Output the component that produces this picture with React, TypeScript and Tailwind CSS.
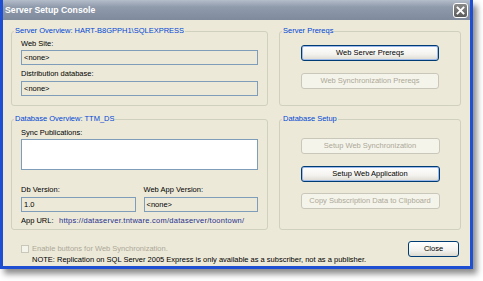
import React from "react";

const field = "h-[15px] border border-[#7F9DB9] bg-[#ECE9D8] px-[2px] flex items-center";
const btn = "h-[16px] mx-auto flex items-center justify-center rounded-[3px] border";
const btnOn = "border-[#003C74] bg-[linear-gradient(#FFFFFF,#F3F2EE_60%,#DCDAD0)] text-black";
const btnFocus = "shadow-[inset_0_0_0_1px_#9DB9EB]";
const btnOff = "border-[#C9C7BA] bg-[#F5F4EA] text-[#ACA899]";

function Group({ title, className, children }: { title: string; className?: string; children: React.ReactNode }) {
    return (
        <fieldset className={"border border-[#D0D0BF] rounded-[3px] px-[9px] " + (className ?? "")}>
            <legend className="ml-[-7px] px-[1px] leading-[10px] text-[#0046D5]">{title}</legend>
            {children}
        </fieldset>
    );
}

function App() {
    return (
        <div className="w-[483px] h-[281px] bg-white font-['Liberation_Sans',Arial,sans-serif] text-[7.5px] text-black">
            <div className="w-[473px] h-[269px] flex flex-col border-x-[3px] border-b-[3px] border-[#1E4FD3] shadow-[4px_5px_6px_rgba(0,0,0,0.45)]">

                {/* title bar */}
                <div className="h-[20px] flex items-center justify-between pl-[2px] pr-[2px] bg-[linear-gradient(#B4BDCA,#8F9AAB_35%,#7F8B9D)]">
                    <span className="text-white font-bold text-[8.7px] leading-none">Server Setup Console</span>
                    <div className="w-[15px] h-[15px] rounded-[3px] border border-white bg-[linear-gradient(#8A8A8A,#5A5A5A)] flex items-center justify-center">
                        <svg width="9" height="9" viewBox="0 0 9 9">
                            <path d="M1.5 1.5L7.5 7.5M7.5 1.5L1.5 7.5" stroke="white" strokeWidth="1.8" strokeLinecap="square" />
                        </svg>
                    </div>
                </div>

                <div className="flex-1 bg-[#ECE9D8] pl-[8px] pr-[9px] pt-[6px] flex flex-col">
                    <div className="grid grid-cols-[257px_182px] gap-x-[11px] gap-y-[8px]">

                        <Group title="Server Overview: HART-B8GPPH1\SQLEXPRESS" className="h-[80px]">
                            <div className="mt-[3px] leading-[10px]">Web Site:</div>
                            <div className={field + " mt-[1px]"}>&lt;none&gt;</div>
                            <div className="mt-[4px] leading-[10px]">Distribution database:</div>
                            <div className={field + " mt-[2px]"}>&lt;none&gt;</div>
                        </Group>

                        <Group title="Server Prereqs" className="h-[80px]">
                            <div className={btn + " " + btnOn + " " + btnFocus + " w-[138px] mt-[9px]"}>Web Server Prereqs</div>
                            <div className={btn + " " + btnOff + " w-[138px] mt-[12px]"}>Web Synchronization Prereqs</div>
                        </Group>

                        <Group title="Database Overview: TTM_DS" className="h-[116px]">
                            <div className="mt-[4px] leading-[10px]">Sync Publications:</div>
                            <div className="mt-[1px] h-[31px] border border-[#7F9DB9] bg-white" />
                            <div className="grid grid-cols-2 gap-x-[8px] mt-[15px]">
                                <div className="leading-[10px]">Db Version:</div>
                                <div className="leading-[10px]">Web App Version:</div>
                                <div className={field + " mt-[2px]"}>1.0</div>
                                <div className={field + " mt-[2px]"}>&lt;none&gt;</div>
                            </div>
                            <div className="mt-[4px] leading-[10px] flex">
                                <span className="w-[38px]">App URL:</span>
                                <span className="text-[#1F2F8F] tracking-[0.25px]">https://dataserver.tntware.com/dataserver/toontown/</span>
                            </div>
                        </Group>

                        <Group title="Database Setup" className="h-[116px]">
                            <div className={btn + " " + btnOff + " w-[139px] mt-[14px]"}>Setup Web Synchronization</div>
                            <div className={btn + " " + btnOn + " " + btnFocus + " w-[139px] mt-[12px]"}>Setup Web Application</div>
                            <div className={btn + " " + btnOff + " w-[139px] mt-[11px]"}>Copy Subscription Data to Clipboard</div>
                        </Group>
                    </div>

                    <div className="flex justify-between">
                        <div className="ml-[10px] mt-[14px] flex flex-col">
                            <div className="flex items-center leading-[10px]">
                                <span className="w-[8px] h-[8px] border border-[#C9C7BA] bg-[#F5F4EA] mr-[3px]" />
                                <span className="text-[#ACA899]">Enable buttons for Web Synchronization.</span>
                            </div>
                            <div className="ml-[11px] mt-[1px] leading-[10px]">
                                NOTE: Replication on SQL Server 2005 Express is only available as a subscriber, not as a publisher.
                            </div>
                        </div>
                        <div className={btn + " " + btnOn + " w-[51px] mt-[11px] mr-[2px] mx-0"}>Close</div>
                    </div>
                </div>
            </div>
        </div>
    );
}

export default App;
